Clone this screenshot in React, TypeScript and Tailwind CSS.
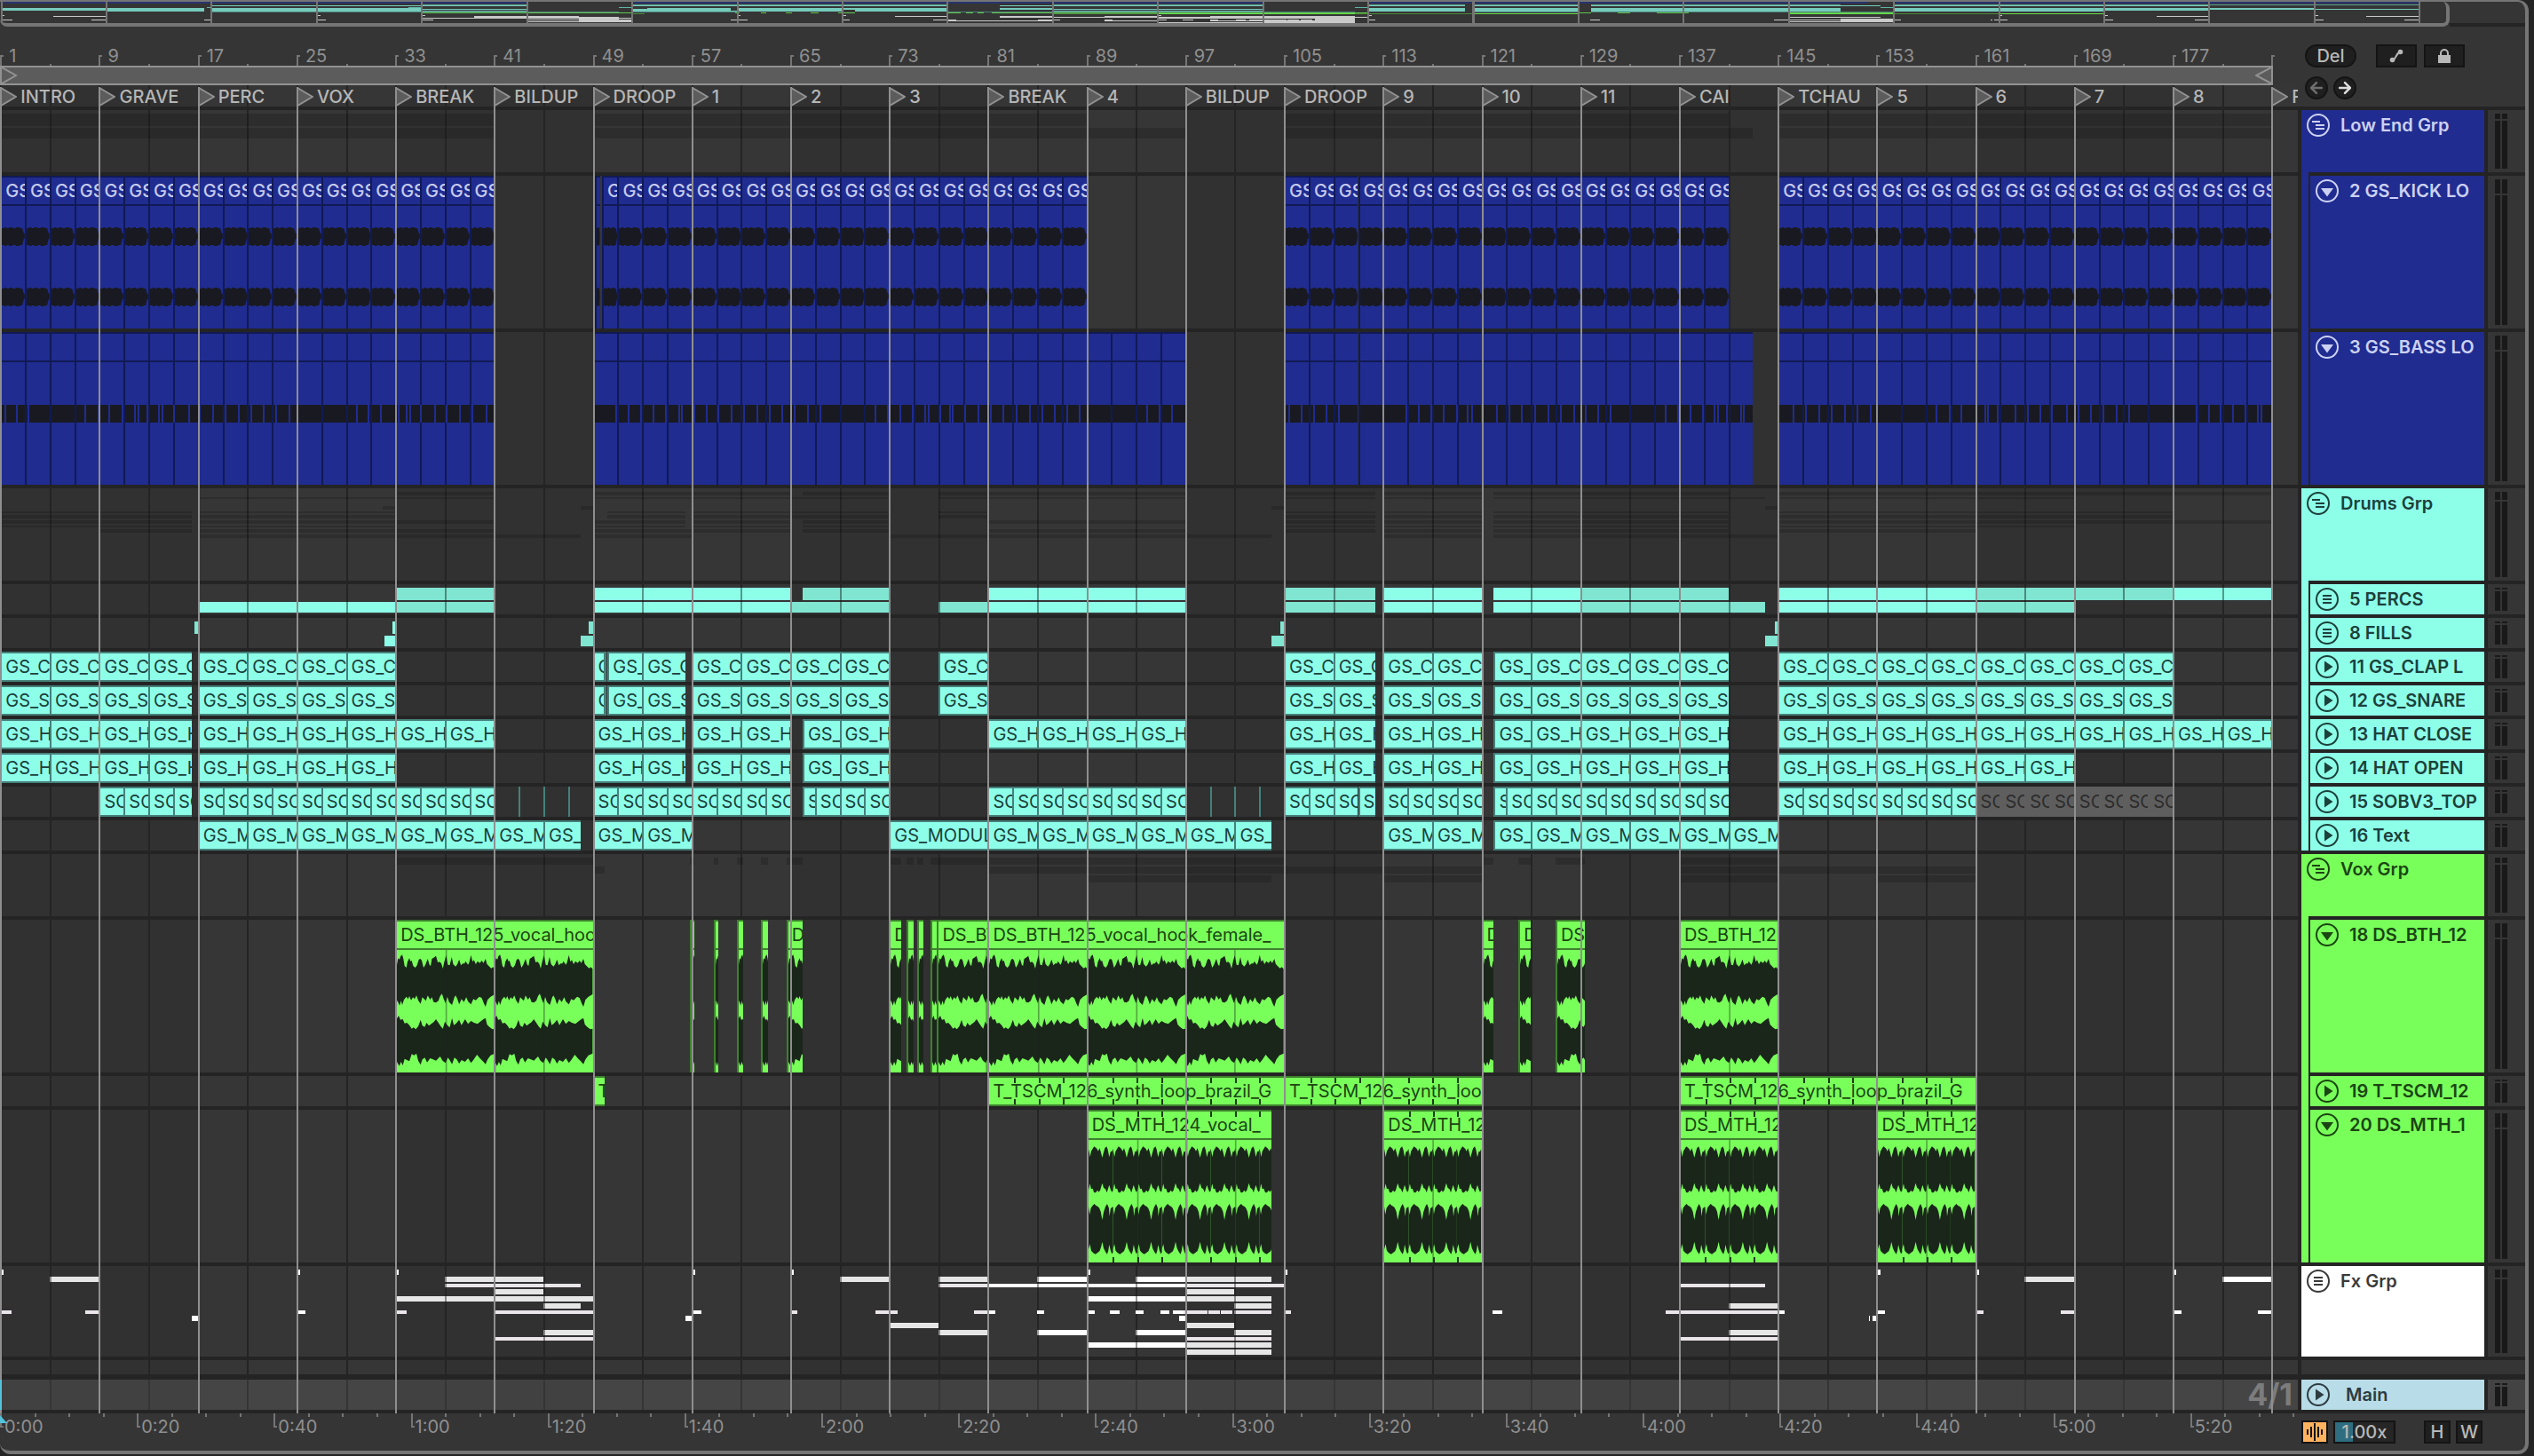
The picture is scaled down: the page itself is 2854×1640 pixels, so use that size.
import { Fragment } from "react";
import clsx from "clsx";
import { ArrowLeft, ArrowRight } from "lucide-react";

/* ------------------------------------------------------------------ */
/* Types                                                               */
/* ------------------------------------------------------------------ */

type IconKind = "group" | "list" | "play" | "down";
type Tone = "blue" | "teal" | "green" | "white" | "main";
type Wave = "kick" | "bass" | "vocal" | "hook";

/** [start bar, end bar] */
type Span = [number, number];

/** One thin block in a folded group lane; offsets are px inside the lane */
interface Block {
  span: Span;
  top: number;
  height: number;
  color: string;
}

interface Clip {
  span: Span;
  label?: string;
  muted?: boolean;
  ticks?: boolean;
}

interface Track {
  name: string;
  icon: IconKind;
  tone: Tone;
  /** Row height including the 4px divider */
  height: string;
  child?: boolean;
  lastChild?: boolean;
  clips?: Clip[];
  blocks?: Block[];
  slivers?: number[];
  wave?: Wave;
}

/* ------------------------------------------------------------------ */
/* Timeline maths                                                      */
/* ------------------------------------------------------------------ */

const VISIBLE_BARS = 186.16;
const LEAD_IN = 0.02;

const pct = (bar: number) => `${((bar - 1 + LEAD_IN) / VISIBLE_BARS) * 100}%`;
const widthPct = ([a, b]: Span) => `${((b - a) / VISIBLE_BARS) * 100}%`;

/** Cuts spans on every `step` bars */
function cut(spans: Span[], step: number): Span[] {
  return spans.flatMap(([from, to]) => {
    const out: Span[] = [];
    let cur = from;
    while (cur < to) {
      const next = Math.min(to, Math.floor((cur - 1) / step) * step + step + 1);
      out.push([cur, next]);
      cur = next;
    }
    return out;
  });
}

const clipsFrom = (spans: Span[], step: number, label?: string): Clip[] =>
  cut(spans, step).map((span) => ({ span, label }));

/* ------------------------------------------------------------------ */
/* Song data                                                           */
/* ------------------------------------------------------------------ */

const LOCATORS = [
  "INTRO", "GRAVE", "PERC", "VOX", "BREAK", "BILDUP", "DROOP", "1", "2", "3", "BREAK", "4",
  "BILDUP", "DROOP", "9", "10", "11", "CAI", "TCHAU", "5", "6", "7", "8", "F",
].map((name, i) => ({ name, bar: 1 + i * 8 }));

const TIMES = [
  "0:00", "0:20", "0:40", "1:00", "1:20", "1:40", "2:00", "2:20", "2:40",
  "3:00", "3:20", "3:40", "4:00", "4:20", "4:40", "5:00", "5:20",
];

const KICK: Span[] = [[1, 41], [49.75, 89], [105, 141], [145, 185]];
const BASS: Span[] = [[1, 41], [49, 97], [105, 143], [145, 185]];
const CLAP: Span[] = [[1, 16.5], [17, 33], [50.2, 56.5], [57, 73], [77, 81], [105, 112.4], [113, 121], [122, 141], [145, 177]];
const HAT_CLOSE: Span[] = [[1, 16.5], [17, 41], [49, 56.5], [57, 65], [66, 73], [81, 97], [105, 112.4], [113, 121], [122, 141], [145, 185]];
const HAT_OPEN: Span[] = [[1, 16.5], [17, 33], [49, 56.5], [57, 65], [66, 73], [105, 112.4], [113, 121], [122, 141], [145, 169]];
const SOB: Span[] = [[9, 16.5], [17, 41], [49, 65], [66, 73], [81, 97], [105, 112.4], [113, 121], [122, 141], [145, 161]];
const TEXT: Span[] = [[17, 48], [49, 57], [81, 104], [113, 121], [122, 145]];
const VOX_A: Span[] = [
  [33, 49], [56.85, 57.2], [58.8, 59.2], [60.7, 61.2], [62.6, 63.2], [64.7, 66], [73, 74],
  [74.4, 75], [75.3, 75.8], [76.4, 76.9], [76.9, 81], [81, 105], [121, 122], [124, 125], [127, 129.4], [137, 145],
];
const VOX_B: Span[] = [[49, 50], [81, 105], [105, 121], [137, 161]];
const VOX_C: Span[] = [[89, 104], [113, 121], [137, 145], [153, 161]];

const BRIGHT = "bg-[#8dffe9]";
const DIM = "bg-[#80e5d1]";

const block = (color: string, top: number, height: number, spans: Span[], step = 4): Block[] =>
  cut(spans, step).map((span) => ({ span, top, height, color }));

const PERC_BLOCKS: Block[] = [
  ...block(BRIGHT, 4, 14, [[49, 65], [81, 97], [113, 121], [122, 129], [145, 161], [177, 185]]),
  ...block(DIM, 4, 14, [[33, 41], [66, 73], [105, 112.4], [129, 141], [161, 177]]),
  ...block(BRIGHT, 20, 12, [[17, 33], [49, 65], [81, 97], [113, 121], [122, 129], [145, 161]]),
  ...block(DIM, 20, 12, [[33, 41], [65, 73], [77, 81], [105, 112.4], [129, 144], [161, 169]]),
];

const FILL_BLOCKS: Block[] = [
  ...block(BRIGHT, 4, 14, [[32.8, 33]]),
  ...block(DIM, 4, 14, [[16.75, 17], [48.7, 49], [104.7, 105], [144.75, 145]]),
  ...block(BRIGHT, 20, 12, [[32.1, 33]]),
  ...block(DIM, 20, 12, [[48, 49], [104, 105], [144, 145]]),
];

const WHITE = "bg-white";
const GREY = "bg-[#e6e6e6]";
const PALE = "bg-[#e9e5e9]";

const FX_BLOCKS: Block[] = [
  ...block(WHITE, 4, 6, [1, 25, 33, 57, 65, 89, 105, 153, 161, 177].map((b): Span => [b + 0.1, b + 0.3])),
  ...block(GREY, 12, 6, [[5, 9], [37, 45], [69, 73], [77, 81], [97, 104], [165, 169]]),
  ...block(WHITE, 12, 6, [[85, 89], [93, 97], [181, 185]]),
  ...block(PALE, 20, 4, [[37, 48], [77, 81], [97, 105], [137, 144]]),
  ...block(WHITE, 20, 4, [[81, 97]]),
  ...block(GREY, 26, 6, [[41, 45], [97, 101]]),
  ...block(GREY, 34, 6, [[33, 49], [97, 104]]),
  ...block(WHITE, 34, 6, [[89, 97]]),
  ...block(GREY, 42, 6, [[45, 48], [101, 104], [141, 145]]),
  ...block(PALE, 50, 4, [
    [1, 1.9], [7.9, 9], [33, 33.9], [41, 49], [65, 65.6], [71.9, 73.7], [79.9, 81], [96.9, 98.8], [98.9, 99.8],
    [99.9, 100.8], [101, 104], [105, 105.6], [135.9, 145], [161, 161.7], [167.9, 169],
  ], 8),
  ...block(WHITE, 50, 4, [
    [25, 25.7], [57, 57.8], [81, 81.6], [85, 85.6], [89, 89.7], [90.9, 91.7], [93, 93.6], [95, 95.7], [96, 96.9],
    [121.9, 122.7], [145, 145.6], [153, 153.7], [177, 177.7], [183.9, 185],
  ], 8),
  ...block(WHITE, 56, 6, [[16.5, 17], [56.5, 57], [96.5, 97], [152.4, 152.5], [152.65, 153]]),
  ...block(GREY, 64, 6, [[73, 77], [97, 101]]),
  ...block(GREY, 72, 6, [[45, 49], [77, 81], [101, 104], [141, 145]]),
  ...block(WHITE, 72, 6, [[85, 89], [93, 97]]),
  ...block(PALE, 80, 4, [[41, 49], [97, 104], [137, 145]]),
  ...block(WHITE, 86, 6, [[89, 97]]),
  ...block(GREY, 86, 6, [[97, 104]]),
  ...block(GREY, 94, 6, [[97, 104]]),
];

const SHADE = "bg-black/15";
const ghost = (top: number, height: number, spans: Span[]) => block(SHADE, top, height, spans, 400);

const LOW_GHOST: Block[] = [...ghost(4, 14, [[1, 41], [49, 89], [105, 141], [145, 185]]), ...ghost(20, 12, BASS)];

const DRUM_GHOST: Block[] = [
  ...ghost(4, 4, [[33, 41], [49, 65], [66, 73], [77, 97], [105, 112.4], [113, 121], [122, 141], [145, 185]]),
  ...ghost(10, 2, [[17, 41], [49, 73], [77, 97], [105, 112.4], [113, 121], [122, 144], [145, 169]]),
  ...ghost(20, 4, [[32, 33], [48, 49], [104, 105], [144, 145]]),
  ...ghost(26, 2, CLAP),
  ...ghost(30, 4, CLAP),
  ...ghost(36, 4, HAT_CLOSE),
  ...ghost(42, 2, HAT_OPEN),
  ...ghost(46, 4, SOB),
  ...ghost(52, 4, [...TEXT, [73, 81]]),
];

const VOX_GHOST: Block[] = [...ghost(4, 8, VOX_A), ...ghost(14, 8, VOX_B), ...ghost(24, 8, VOX_C)];

const TRACKS: Track[] = [
  { name: "Low End Grp", icon: "group", tone: "blue", height: "h-[74px]", blocks: LOW_GHOST },
  {
    name: "2 GS_KICK LO", icon: "down", tone: "blue", height: "h-[176px]", child: true, wave: "kick",
    clips: [{ span: [49.2, 49.6] }, ...clipsFrom(KICK, 2, "GS_KICK")],
  },
  {
    name: "3 GS_BASS LO", icon: "down", tone: "blue", height: "h-[176px]", child: true, lastChild: true, wave: "bass",
    clips: clipsFrom(BASS, 2),
  },
  { name: "Drums Grp", icon: "group", tone: "teal", height: "h-[108px]", blocks: DRUM_GHOST },
  { name: "5 PERCS", icon: "list", tone: "teal", height: "h-[38px]", child: true, blocks: PERC_BLOCKS },
  { name: "8 FILLS", icon: "list", tone: "teal", height: "h-[38px]", child: true, blocks: FILL_BLOCKS },
  {
    name: "11 GS_CLAP L", icon: "play", tone: "teal", height: "h-[38px]", child: true, slivers: [49.9, 50],
    clips: [{ span: [49, 49.9], label: "GS_CLAP" }, ...clipsFrom(CLAP, 4, "GS_CLAP")],
  },
  {
    name: "12 GS_SNARE", icon: "play", tone: "teal", height: "h-[38px]", child: true, slivers: [49.9, 50],
    clips: [{ span: [49, 49.9], label: "GS_SNARE" }, ...clipsFrom(CLAP, 4, "GS_SNARE")],
  },
  {
    name: "13 HAT CLOSE", icon: "play", tone: "teal", height: "h-[38px]", child: true,
    clips: clipsFrom(HAT_CLOSE, 4, "GS_HAT"),
  },
  {
    name: "14 HAT OPEN", icon: "play", tone: "teal", height: "h-[38px]", child: true,
    clips: clipsFrom(HAT_OPEN, 4, "GS_HAT"),
  },
  {
    name: "15 SOBV3_TOP", icon: "play", tone: "teal", height: "h-[38px]", child: true,
    slivers: [43, 45, 47, 99, 101, 103],
    clips: [
      ...clipsFrom(SOB, 2, "SOBV3"),
      ...clipsFrom([[161, 177]], 2, "SOBV3").map((c) => ({ ...c, muted: true })),
    ],
  },
  {
    name: "16 Text", icon: "play", tone: "teal", height: "h-[38px]", child: true, lastChild: true,
    clips: [...clipsFrom(TEXT, 4, "GS_MODULAR"), { span: [73, 81], label: "GS_MODULAR" }],
  },
  { name: "Vox Grp", icon: "group", tone: "green", height: "h-[74px]", blocks: VOX_GHOST },
  {
    name: "18 DS_BTH_12", icon: "down", tone: "green", height: "h-[176px]", child: true, wave: "vocal",
    clips: VOX_A.map((span) => ({ span, label: "DS_BTH_125_vocal_hook_female_" })),
  },
  {
    name: "19 T_TSCM_12", icon: "play", tone: "green", height: "h-[38px]", child: true,
    clips: VOX_B.map((span) => ({ span, label: "T_TSCM_126_synth_loop_brazil_G", ticks: true })),
  },
  {
    name: "20 DS_MTH_1", icon: "down", tone: "green", height: "h-[176px]", child: true, lastChild: true, wave: "hook",
    clips: VOX_C.map((span) => ({ span, label: "DS_MTH_124_vocal_", ticks: true })),
  },
  { name: "Fx Grp", icon: "list", tone: "white", height: "h-[106px]", blocks: FX_BLOCKS },
];

const HEADER_TONE: Record<Tone, string> = {
  blue: "bg-[#202c90] text-[#ccd1f3]",
  teal: "bg-[#8dffe9] text-[#1c403a]",
  green: "bg-[#79ff5a] text-[#1b4512]",
  white: "bg-white text-[#3a3a3a]",
  main: "bg-[#b8dde8] text-[#2d3c41]",
};

const CLIP_TONE: Record<Tone, string> = {
  blue: "bg-[#202c90] text-[#c6cbee] border-[#101a55]",
  teal: "bg-[#8dffe9] text-[#1b403a] border-[#46807a]",
  green: "bg-[#79ff5a] text-[#1b4512] border-[#3d812e]",
  white: "bg-white text-[#333333] border-[#888888]",
  main: "bg-[#b8dde8] text-[#333333] border-[#888888]",
};

/* ------------------------------------------------------------------ */
/* Waveforms                                                           */
/* ------------------------------------------------------------------ */

const VOCAL_PATH =
  "M0 50 4 28 9 32 12 22 18 16 22 30 26 54 32 60 36 40 42 28 46 38 50 36 55 54 62 60 68 52 74 32 80 30 84 36 90 60 96 50 104 30 110 50 114 54 118 30 124 26 132 20 138 42 144 40 150 46 155 63 160 40 166 18 172 50 178 52 185 24 190 48 198 56 204 48 210 32 216 52 222 46 228 46 232 38 240 50 244 42 250 17 255 40 260 34 266 48 272 38 280 44 286 36 292 44 299 30 304 48 312 56 318 62 324 58 330 64 " +
  "330 150 316 158 306 168 299 192 294 182 286 162 278 158 266 170 258 166 250 184 240 174 234 160 226 176 218 166 210 184 204 166 198 154 194 160 186 186 176 176 170 158 164 180 158 166 152 148 146 156 140 172 132 178 124 176 118 160 112 168 104 154 98 172 92 166 86 160 80 182 72 170 66 154 60 166 54 160 48 170 42 156 38 166 32 158 24 168 18 186 14 172 9 188 4 176 0 170Z" +
  "M0 232 6 222 12 236 20 234 26 248 34 246 42 254 50 266 56 262 64 268 72 258 80 236 86 256 94 260 100 246 108 256 116 250 124 244 132 234 140 246 148 258 155 266 162 242 170 254 178 262 186 230 192 254 200 248 210 236 218 254 230 234 240 250 250 240 260 246 272 250 284 240 292 234 299 230 304 252 312 260 322 268 330 266 " +
  "330 350 316 356 306 370 299 386 292 378 280 366 270 354 258 372 250 382 240 366 230 378 218 372 210 384 202 370 194 364 186 386 178 372 172 364 164 382 154 374 146 360 140 366 132 374 122 370 112 366 102 380 94 364 86 370 80 388 72 374 66 350 58 356 50 352 42 376 34 372 26 368 20 390 14 378 8 392 0 378Z";

const HOOK_PATH =
  "M0 30 3 45 5 58 9 38 14 30 19 22 25 26 29 30 33 38 38 28 42 40 47 60 51 45 56 28 62 22 66 32 71 58 76 38 80 40 84 30 " +
  "84 172 80 176 76 168 71 152 63 178 58 166 52 162 47 146 40 170 35 176 31 170 25 178 19 178 14 164 9 166 5 148 0 170Z" +
  "M0 225 4 252 8 230 14 222 20 216 26 222 32 225 37 230 42 242 47 270 52 244 58 226 64 216 70 230 72 258 76 232 84 225 " +
  "84 380 80 385 76 374 71 354 68 374 64 386 58 378 52 366 47 344 43 362 38 376 32 380 24 386 16 382 9 374 5 352 0 370Z";

const KICK_PATH =
  "M0 59H3V58H6V59H9V58H13V59H17V58H22V59H25L27 65H28V71H27L25 78H22V79H17V78H13V79H9V78H6V79H3V78H0Z";

/** Note gaps of the bass part, as px on a 2588px wide timeline */
const BASS_GAPS = [
  5, 18, 31, 95, 110, 122, 137, 151, 155, 165, 178, 182, 195, 212, 224, 239, 253, 268, 282, 296, 310, 325, 401, 414,
  428, 448, 457, 461, 473, 489, 502, 517, 531, 547, 693, 707, 721, 735, 749, 764, 767, 781, 795, 808, 823, 837, 852,
  866, 880, 894, 909, 923, 985, 999, 1013, 1027, 1041, 1045, 1058, 1069, 1072, 1086, 1101, 1115, 1129, 1144, 1159,
  1173, 1187, 1201, 1215, 1291, 1305, 1319, 1451, 1465, 1479, 1493, 1507, 1583, 1597, 1611, 1625, 1640, 1652, 1657,
  1668, 1685, 1699, 1713, 1728, 1743, 1757, 1772, 1785, 1799, 1813, 1875, 1889, 1903, 1917, 1930, 1934, 1944, 1960,
  1963, 2019, 2033, 2048, 2062, 2077, 2091, 2106, 2180, 2195, 2208, 2225, 2235, 2238, 2249, 2269, 2283, 2297, 2310,
  2327, 2340, 2354, 2368, 2383, 2397, 2473, 2487, 2500, 2514, 2528, 2542, 2546,
];

function RepeatedWave({ span, path, unit, bars }: { span: Span; path: string; unit: number; bars: number }) {
  const length = span[1] - span[0];
  const copies = Math.ceil(length / bars);
  const grid = Array.from({ length: Math.ceil(length / 4) }, (_, i) => (i + 1) * 4).filter((b) => b < length);
  return (
    <svg
      className="block h-full w-full"
      viewBox={`0 0 ${(length / bars) * unit} 414`}
      preserveAspectRatio="none"
      aria-hidden="true"
    >
      {Array.from({ length: copies }, (_, i) => (
        <path key={i} d={path} transform={`translate(${i * unit} 0)`} fill="#1b261b" />
      ))}
      {grid.map((b) => (
        <rect key={b} x={(b / bars) * unit - 1} y="0" width="5" height="414" fill="#1b261b" fillOpacity="0.4" />
      ))}
    </svg>
  );
}

function ClipWave({ wave, span }: { wave: Wave; span: Span }) {
  if (wave === "vocal") return <RepeatedWave span={span} path={VOCAL_PATH} unit={330} bars={8} />;
  if (wave === "hook") return <RepeatedWave span={span} path={HOOK_PATH} unit={84} bars={2} />;
  if (wave === "kick") {
    return (
      <svg className="block h-full w-full" viewBox="0 34 28 138" preserveAspectRatio="none" aria-hidden="true">
        <path d={KICK_PATH} fill="#191a21" />
        <path d={KICK_PATH} transform="translate(0 68)" fill="#191a21" />
      </svg>
    );
  }
  return <div className="mt-12 h-5 bg-[#191a21]" />;
}

/* ------------------------------------------------------------------ */
/* Arrangement lanes                                                   */
/* ------------------------------------------------------------------ */

function ClipBox({ clip, track }: { clip: Clip; track: Track }) {
  const { span, label, muted, ticks } = clip;
  const marks = ticks
    ? Array.from({ length: Math.floor((span[1] - span[0]) / 2) }, (_, i) => (i + 1) * 2).filter(
        (b) => b % 8 !== 0 && b < span[1] - span[0],
      )
    : [];
  const markLeft = (b: number) => `${(b / (span[1] - span[0])) * 100}%`;
  const showLabel = label && span[1] - span[0] > 0.8;

  return (
    <div
      className={clsx(
        "absolute inset-y-0 flex flex-col overflow-hidden whitespace-nowrap border-l-2 border-t-2",
        !track.wave && "border-b-2",
        muted ? "border-[#5e5e5e] bg-[#5e5e5e] text-[#2c2c2c]" : CLIP_TONE[track.tone],
      )}
      style={{ left: pct(span[0]), width: widthPct(span) }}
    >
      <span
        className={clsx(
          "h-[30px] shrink-0 pl-1 text-[20px] leading-[30px]",
          track.tone === "blue" && "font-medium",
        )}
      >
        {showLabel ? label : ""}
      </span>
      {track.wave && (
        <div className="min-h-0 flex-1 border-t-2 border-inherit">
          <ClipWave wave={track.wave} span={span} />
        </div>
      )}
      {marks.map((b) => (
        <Fragment key={b}>
          <i className="absolute top-0 h-1.5 w-0.5 bg-[#1b3a16]" style={{ left: markLeft(b) }} />
          <i className="absolute bottom-0 h-1.5 w-0.5 bg-[#1b3a16]" style={{ left: markLeft(b) }} />
        </Fragment>
      ))}
    </div>
  );
}

function Lane({ track }: { track: Track }) {
  return (
    <div className={clsx("relative border-b-4 border-[#242424]", track.height)}>
      {track.clips?.map((clip) => <ClipBox key={clip.span[0]} clip={clip} track={track} />)}
      {track.slivers?.map((bar) => (
        <i key={bar} className="absolute inset-y-0 w-0.5 bg-[#46807a]" style={{ left: pct(bar) }} />
      ))}
      {track.blocks?.map((b, i) => (
        <i
          key={i}
          className={clsx(
            "absolute",
            b.color,
            b.color !== SHADE && (b.span[0] - 1) % 4 === 0 && b.span[1] - b.span[0] > 2 && "border-l-2 border-black/40",
          )}
          style={{ left: pct(b.span[0]), width: widthPct(b.span), top: b.top, height: b.height }}
        />
      ))}
      {track.wave === "bass" &&
        BASS_GAPS.map((x) => (
          <i
            key={x}
            className="absolute top-[82px] h-5 w-0.5 bg-[#202c90]"
            style={{ left: `${(x / 2588) * 100}%` }}
          />
        ))}
    </div>
  );
}

/** Sixteen-bar shading and the four-bar grid behind every lane */
function GridBackdrop() {
  return (
    <div className="absolute inset-0" aria-hidden="true">
      {Array.from({ length: 12 }, (_, i) => 1 + i * 16).map((bar, i) => (
        <i
          key={bar}
          className={clsx("absolute inset-y-0", i % 2 ? "bg-[#363636]" : "bg-[#313131]")}
          style={{ left: pct(bar), width: widthPct([bar, bar + 16]) }}
        />
      ))}
      {Array.from({ length: 47 }, (_, i) => 1 + i * 4).map((bar) => (
        <i key={bar} className="absolute inset-y-0 w-0.5 bg-[#242424]" style={{ left: pct(bar) }} />
      ))}
    </div>
  );
}

function BarRuler() {
  return (
    <div className="relative h-11 text-[20px] leading-5 text-[#8f8f8f]">
      {LOCATORS.map(({ bar }) => (
        <Fragment key={bar}>
          <div
            className="absolute bottom-0 h-3 w-1 border-l-2 border-t-2 border-[#757575]"
            style={{ left: pct(bar) }}
          />
          {bar < 185 && (
            <>
              <span className="absolute top-[23px] pl-2.5" style={{ left: pct(bar) }}>
                {bar}
              </span>
              <i className="absolute bottom-0 h-0.5 w-0.5 bg-[#757575]" style={{ left: pct(bar + 4) }} />
            </>
          )}
        </Fragment>
      ))}
    </div>
  );
}

function LoopBrace() {
  return (
    <div
      className="flex h-[22px] items-center justify-between border-y-2 border-r-2 border-[#929292] bg-[#5c5c5c]"
      style={{ width: pct(185.14) }}
    >
      <svg width="20" height="18" viewBox="0 0 20 18" fill="none" stroke="#929292" strokeWidth="2" aria-hidden="true">
        <path d="M2 0 18 9 2 18M1 0V18" />
      </svg>
      <svg width="18" height="18" viewBox="0 0 18 18" fill="none" stroke="#929292" strokeWidth="2" aria-hidden="true">
        <path d="M18 0 1 9 18 18" />
      </svg>
    </div>
  );
}

function LocatorRow() {
  return (
    <div className="relative h-7 border-b-4 border-[#242424]">
      {LOCATORS.map(({ name, bar }) => (
        <button
          key={bar}
          className="absolute inset-y-0 flex items-center gap-1 pt-0.5 text-[20px] font-medium leading-5 text-[#b6b6b6]"
          style={{ left: pct(bar) }}
        >
          <svg width="19" height="22" viewBox="0 0 19 22" aria-hidden="true">
            <path d="M1 1 18 11 1 21Z" fill="#5c5c5c" stroke="#929292" strokeWidth="2" />
          </svg>
          {name}
        </button>
      ))}
    </div>
  );
}

function TimeRuler() {
  return (
    <div className="relative h-[42px] text-[20px] leading-5 text-[#8f8f8f]">
      {TIMES.map((time, i) => (
        <Fragment key={time}>
          <div
            className="absolute top-0 h-4 w-1 border-b-2 border-l-2 border-[#757575]"
            style={{ left: `${i * 5.957}%` }}
          />
          <span className="absolute top-[5px] pl-[5px]" style={{ left: `${i * 5.957}%` }}>
            {time}
          </span>
          {[1, 2, 3].map((n) => (
            <i
              key={n}
              className="absolute top-0 h-1 w-0.5 bg-[#757575]"
              style={{ left: `${(i + n / 4) * 5.957}%` }}
            />
          ))}
        </Fragment>
      ))}
      <svg className="absolute left-0 top-0.5" width="8" height="9" viewBox="0 0 8 9" aria-hidden="true">
        <path d="M0 0 8 9H0Z" fill="#52c3db" />
      </svg>
    </div>
  );
}

/* ------------------------------------------------------------------ */
/* Track headers                                                       */
/* ------------------------------------------------------------------ */

function HeaderIcon({ kind }: { kind: IconKind }) {
  return (
    <svg width="26" height="26" viewBox="0 0 26 26" fill="none" stroke="currentColor" strokeWidth="2" aria-hidden="true">
      <circle cx="13" cy="13" r="12" />
      {kind === "group" && <path d="M6 9h9M10 13h10M10 17h10" />}
      {kind === "list" && <path d="M8 9h10M8 13h10M8 17h10" />}
      {kind === "play" && <path d="M10 6.500 19.500 13 10 19.500Z" fill="currentColor" stroke="none" />}
      {kind === "down" && <path d="M6 10H20L13 19.500Z" fill="currentColor" stroke="none" />}
    </svg>
  );
}

function Meter({ light }: { light?: boolean }) {
  return (
    <div className={clsx("mb-1 flex flex-1 gap-0.5 py-1 pl-2", light ? "bg-[#434343]" : "bg-[#353535]")}>
      {[0, 1].map((n) => (
        <div key={n} className="flex w-1.5 flex-col gap-0.5">
          <div className="flex-1 bg-[#191919]" />
          <div className="flex-9 bg-[#191919]" />
        </div>
      ))}
    </div>
  );
}

function TrackHeader({ track }: { track: Pick<Track, "name" | "icon" | "tone" | "height" | "child" | "lastChild"> }) {
  const tone = HEADER_TONE[track.tone];
  const hasChildren = track.icon === "group";
  return (
    <div className={clsx("flex bg-[#242424] pl-1", track.height)}>
      <div className="relative flex w-[206px] shrink-0 gap-0.5">
        {track.child && <div className={clsx("w-2", tone, track.lastChild && "mb-1")} />}
        <div className={clsx("mb-1 flex min-w-0 flex-1 items-start gap-3 overflow-hidden pl-1.5 pt-1", tone)}>
          <button className="shrink-0" aria-label={`Fold ${track.name}`}>
            <HeaderIcon kind={track.icon} />
          </button>
          <span
            className={clsx(
              "whitespace-nowrap text-[20px] font-semibold leading-[26px]",
              track.tone === "main" && "pl-1.5",
            )}
          >
            {track.name}
          </span>
        </div>
        {hasChildren && <div className={clsx("absolute bottom-0 left-0 h-1 w-2", tone)} />}
      </div>
      <div className="w-1 shrink-0" />
      <Meter light={track.tone === "main"} />
    </div>
  );
}

const darkButton = "flex items-center justify-center border-2 border-[#141414] bg-[#1f1f1f]";

function LocatorControls() {
  return (
    <div className="flex h-[90px] flex-col gap-2.5 pl-2 pt-5 text-[#b8b8b8]">
      <div className="flex items-center text-[20px] font-medium leading-5">
        <button className={clsx(darkButton, "h-[26px] w-[58px] rounded-full")}>Del</button>
        <button className={clsx(darkButton, "ml-[22px] h-[26px] w-[46px]")} aria-label="Automation mode">
          <svg width="16" height="16" viewBox="0 0 16 16" aria-hidden="true">
            <path d="M3.500 12.500C9 11 6 6 12.500 3.500" fill="none" stroke="currentColor" strokeWidth="2" />
            <circle cx="3.500" cy="12.500" r="2.800" fill="currentColor" />
            <circle cx="12.500" cy="3.500" r="2.800" fill="currentColor" />
          </svg>
        </button>
        <button className={clsx(darkButton, "ml-2 h-[26px] w-[46px]")} aria-label="Lock envelopes">
          <svg width="16" height="16" viewBox="0 0 16 16" aria-hidden="true">
            <rect x="1" y="7" width="14" height="9" fill="currentColor" />
            <path d="M4 7V5a4 4 0 0 1 8 0V7" fill="none" stroke="currentColor" strokeWidth="2" />
          </svg>
        </button>
      </div>
      <div className="flex gap-1.5">
        <button className={clsx(darkButton, "size-[26px] rounded-full text-[#6f6f6f]")} aria-label="Previous locator">
          <ArrowLeft size={20} strokeWidth={3} />
        </button>
        <button className={clsx(darkButton, "size-[26px] rounded-full text-[#dddddd]")} aria-label="Next locator">
          <ArrowRight size={20} strokeWidth={3} />
        </button>
      </div>
    </div>
  );
}

function BottomControls() {
  return (
    <div className="flex h-[42px] pl-1 pt-2 text-[20px] font-medium leading-5 text-[#b8b8b8]">
      <button
        className="flex h-[26px] w-[30px] items-center justify-center border-2 border-[#141414] bg-[#ffb35f]"
        aria-label="Follow audio"
      >
        <svg width="22" height="20" viewBox="0 0 22 20" stroke="#141414" strokeWidth="2" aria-hidden="true">
          <path d="M3 7v6M7 4v12M11 0v20M15 4v12M19 7v6" />
        </svg>
      </button>
      <button className="relative ml-1.5 h-[26px] w-[70px] border-2 border-[#141414] bg-[#262626]">
        <i className="absolute inset-y-0 left-0 w-5 bg-[#2f6e80]" />
        <span className="relative">1.00x</span>
      </button>
      <button className={clsx(darkButton, "ml-8 h-[26px] w-[30px]")}>H</button>
      <button className={clsx(darkButton, "ml-1.5 h-[26px] w-[30px]")}>W</button>
    </div>
  );
}

/* ------------------------------------------------------------------ */
/* Overview                                                            */
/* ------------------------------------------------------------------ */

const OVERVIEW_ROWS: { spans: Span[]; y: number; h: number; fill: string }[] = [
  { spans: [[1, 41], [49, 97], [105, 143], [145, 185]], y: 0, h: 2, fill: "#28346f" },
  { spans: [[33, 41], [49, 73], [81, 97], [105, 112.4], [113, 121], [122, 141], [145, 185]], y: 3, h: 1, fill: "#5fa398" },
  { spans: [[17, 41], [49, 73], [77, 97], [105, 112.4], [113, 121], [122, 144], [145, 169]], y: 4, h: 1, fill: "#76cbbd" },
  { spans: [[16.7, 17], [32, 33], [48, 49], [104, 105], [144, 145]], y: 6, h: 1, fill: "#5fb5a6" },
  { spans: CLAP, y: 7, h: 2, fill: "#76cbbd" },
  { spans: HAT_CLOSE, y: 8, h: 1, fill: "#76cbbd" },
  { spans: HAT_OPEN, y: 9, h: 1, fill: "#76cbbd" },
  { spans: SOB, y: 10, h: 1, fill: "#76cbbd" },
  { spans: [...TEXT, [73, 81]], y: 11, h: 1, fill: "#4c8178" },
  { spans: VOX_A, y: 12, h: 1, fill: "#62c74b" },
  { spans: VOX_B, y: 13, h: 1, fill: "#4a8a3c" },
  { spans: VOX_C, y: 13, h: 1, fill: "#67e04a" },
];

const overviewFx = FX_BLOCKS.map((b) => ({ span: b.span, y: 15 + Math.round((b.top / 100) * 9) }));

function Overview() {
  return (
    <div className="flex h-7 items-stretch">
      <div className="w-[97%] overflow-hidden rounded-r-lg rounded-bl-lg border-b-4 border-r-4 border-[#757575]">
        <svg
          className="block h-6 w-full"
          viewBox="0 0 186.1 24"
          preserveAspectRatio="none"
          shapeRendering="crispEdges"
          aria-hidden="true"
        >
          {OVERVIEW_ROWS.flatMap((row) =>
            row.spans.map(([a, b]) => (
              <rect key={`${row.fill}${row.y}-${a}`} x={a - 0.93} y={row.y} width={b - a} height={row.h} fill={row.fill} />
            )),
          )}
          {overviewFx.map(({ span: [a, b], y }, i) => (
            <rect key={i} x={a - 0.93} y={y} width={b - a} height="1" fill="#c9c9c9" />
          ))}
          {LOCATORS.map(({ bar }) => (
            <rect key={bar} x={bar - 0.96} y="0" width="0.14" height="24" fill="#757575" />
          ))}
        </svg>
      </div>
      <div className="flex-1 border-b-4 border-[#242424]" />
    </div>
  );
}

/* ------------------------------------------------------------------ */
/* App                                                                 */
/* ------------------------------------------------------------------ */

export default function App() {
  return (
    <main className="min-h-screen w-full bg-[#242424] pr-1.5 font-['Inter',sans-serif]">
      <div className="overflow-hidden rounded-r-xl rounded-bl-xl border-b-4 border-r-4 border-t-2 border-[#757575] bg-[#353535]">
        <Overview />

        <div className="flex">
          {/* Timeline */}
          <section className="min-w-0 flex-1 overflow-hidden" aria-label="Arrangement">
            <BarRuler />
            <LoopBrace />
            <div className="relative">
              <GridBackdrop />
              <div className="relative">
                <LocatorRow />
                {TRACKS.map((track) => (
                  <Lane key={track.name} track={track} />
                ))}
                <div className="h-[22px] border-b-[6px] border-[#242424]" />
                <div className="h-[38px] border-b-4 border-[#242424] bg-white/8 pr-1.5 text-right text-[34px] font-bold leading-[34px] text-[#7c7c7c]">
                  4/1
                </div>
              </div>
              {/* Locator lines run over every clip */}
              {LOCATORS.map(({ bar }) => (
                <i key={bar} className="absolute bottom-0 top-0.5 w-0.5 bg-[#8f8f8f]" style={{ left: pct(bar) }} />
              ))}
              <i className="absolute bottom-1 left-0 h-[34px] w-0.5 bg-[#52c3db]" />
            </div>
            <TimeRuler />
          </section>

          {/* Headers */}
          <aside className="w-[256px] shrink-0" aria-label="Tracks">
            <LocatorControls />
            <div className="h-1 bg-[#242424]" />
            {TRACKS.map((track) => (
              <TrackHeader key={track.name} track={track} />
            ))}
            <div className="h-[22px] border-b-[6px] border-l-4 border-[#242424]" />
            <TrackHeader track={{ name: "Main", icon: "play", tone: "main", height: "h-[38px]" }} />
            <BottomControls />
          </aside>
        </div>
      </div>
    </main>
  );
}
